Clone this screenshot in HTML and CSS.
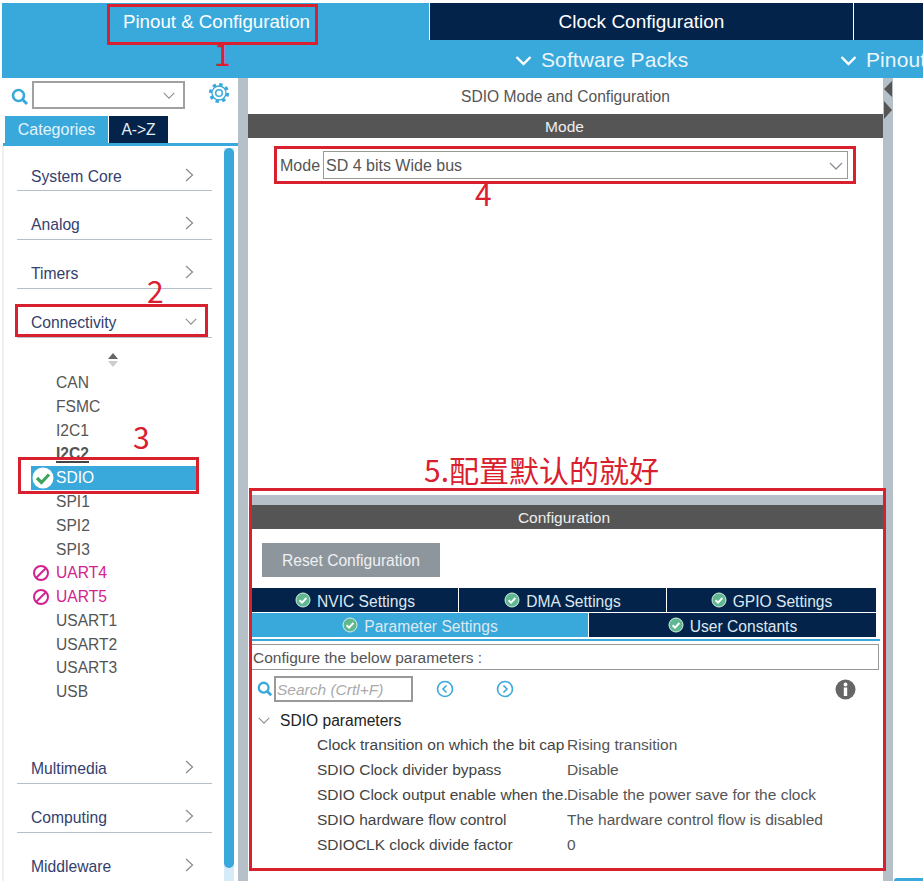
FILE: index.html
```html
<!DOCTYPE html>
<html lang="en">
<head>
  <meta charset="UTF-8">
  <title>SDIO Mode and Configuration</title>
  <link rel="stylesheet" href="styles.css">
</head>
<body>
  <svg class="defs" width="0" height="0">
    <symbol id="tick" viewBox="0 0 16 16">
      <circle cx="8" cy="8" r="7" fill="#5fb88f" stroke="#d5efe2" stroke-width="1"/>
      <path d="M4.6 8.2 7 10.6 11.4 6" fill="none" stroke="#fff" stroke-width="2"/>
    </symbol>
    <symbol id="blocked" viewBox="0 0 18 18">
      <circle cx="9" cy="9" r="7" fill="none" stroke="#d3218f" stroke-width="2"/>
      <path d="M4.5 13.5 13.5 4.5" stroke="#d3218f" stroke-width="2"/>
    </symbol>
    <symbol id="lens" viewBox="0 0 18 18">
      <circle cx="7.5" cy="7.5" r="5.5" fill="none" stroke="#39a9dc" stroke-width="2.6"/>
      <path d="M11.5 11.5 16 16" stroke="#39a9dc" stroke-width="3"/>
    </symbol>
    <symbol id="chev-right" viewBox="0 0 10 16">
      <path d="M2 2 8.5 8 2 14" fill="none" stroke="#8b8f96" stroke-width="1.3"/>
    </symbol>
    <symbol id="chev-down" viewBox="0 0 16 10">
      <path d="M2 2 8 8 14 2" fill="none" stroke="#8b8f96" stroke-width="1.3"/>
    </symbol>
  </svg>

  <div class="app">
    <header class="top">
      <div class="tabs-main">
        <div class="tab-main active">Pinout &amp; Configuration</div>
        <div class="tab-main clock">Clock Configuration</div>
        <div class="tab-main rest"></div>
      </div>
      <div class="subnav">
        <div class="subnav-item packs">
          <svg width="17" height="11" viewBox="0 0 17 11"><path d="M1.5 2 8.5 9 15.5 2" fill="none" stroke="#fff" stroke-width="2.4"/></svg>
          Software Packs
        </div>
        <div class="subnav-item pinout">
          <svg width="17" height="11" viewBox="0 0 17 11"><path d="M1.5 2 8.5 9 15.5 2" fill="none" stroke="#fff" stroke-width="2.4"/></svg>
          Pinout
        </div>
      </div>
    </header>

    <div class="main">
      <aside class="left">
        <div class="search-row">
          <svg class="search-icon" width="18" height="18"><use href="#lens"/></svg>
          <div class="combo"><svg width="14" height="9"><use href="#chev-down"/></svg></div>
          <svg class="gear" width="22" height="22" viewBox="0 0 22 22">
            <circle cx="11" cy="11" r="8.6" fill="none" stroke="#39a9dc" stroke-width="3" stroke-dasharray="3.4 3.35"/>
            <circle cx="11" cy="11" r="7" fill="none" stroke="#39a9dc" stroke-width="1.3"/>
            <circle cx="11" cy="11" r="3.3" fill="none" stroke="#39a9dc" stroke-width="1.5"/>
          </svg>
        </div>
        <div class="cat-tabs">
          <div class="cat-tab active">Categories</div>
          <div class="cat-tab">A-&gt;Z</div>
        </div>
        <div class="cat-body">
          <div class="cat-list">
            <div class="cat">System Core <svg width="10" height="16"><use href="#chev-right"/></svg></div>
            <div class="cat">Analog <svg width="10" height="16"><use href="#chev-right"/></svg></div>
            <div class="cat">Timers <svg width="10" height="16"><use href="#chev-right"/></svg></div>
            <div class="cat">Connectivity <svg class="open" width="14" height="9"><use href="#chev-down"/></svg></div>
            <div class="periph">
              <svg class="updown" width="10" height="14" viewBox="0 0 10 14">
                <path d="M5 0 10 6H0Z" fill="#666"/>
                <path d="M5 14 10 8H0Z" fill="#ccc"/>
              </svg>
              <div class="item">CAN</div>
              <div class="item">FSMC</div>
              <div class="item">I2C1</div>
              <div class="item"><span class="used">I2C2</span></div>
              <div class="item selected">
                <svg class="state" width="22" height="22" viewBox="0 0 22 22">
                  <circle cx="11" cy="11" r="10.5" fill="#fff"/>
                  <path d="M5 11 9.5 15.5 17 7.5" fill="none" stroke="#3fa35f" stroke-width="3.2"/>
                </svg>
                SDIO
              </div>
              <div class="item">SPI1</div>
              <div class="item">SPI2</div>
              <div class="item">SPI3</div>
              <div class="item off"><svg class="state" width="18" height="18"><use href="#blocked"/></svg>UART4</div>
              <div class="item off"><svg class="state" width="18" height="18"><use href="#blocked"/></svg>UART5</div>
              <div class="item">USART1</div>
              <div class="item">USART2</div>
              <div class="item">USART3</div>
              <div class="item">USB</div>
            </div>
            <div class="cat">Multimedia <svg width="10" height="16"><use href="#chev-right"/></svg></div>
            <div class="cat">Computing <svg width="10" height="16"><use href="#chev-right"/></svg></div>
            <div class="cat">Middleware <svg width="10" height="16"><use href="#chev-right"/></svg></div>
          </div>
          <div class="scroll"><div class="scroll-thumb"></div></div>
        </div>
      </aside>

      <div class="divider"></div>

      <section class="center">
        <div class="center-title">SDIO Mode and Configuration</div>
        <div class="bar">Mode</div>
        <div class="mode-row">
          <span class="mode-label">Mode</span>
          <div class="mode-select">SD 4 bits Wide bus <svg width="16" height="10"><use href="#chev-down"/></svg></div>
        </div>

        <div class="config">
          <div class="config-strip"></div>
          <div class="bar">Configuration</div>
          <button class="reset">Reset Configuration</button>
          <div class="cfg-tabs">
            <div class="cfg-tab"><svg width="16" height="16"><use href="#tick"/></svg>NVIC Settings</div>
            <div class="cfg-tab"><svg width="16" height="16"><use href="#tick"/></svg>DMA Settings</div>
            <div class="cfg-tab"><svg width="16" height="16"><use href="#tick"/></svg>GPIO Settings</div>
          </div>
          <div class="cfg-tabs second">
            <div class="cfg-tab active"><svg width="16" height="16"><use href="#tick"/></svg>Parameter Settings</div>
            <div class="cfg-tab"><svg width="16" height="16"><use href="#tick"/></svg>User Constants</div>
          </div>
          <div class="cfg-note">Configure the below parameters :</div>
          <div class="cfg-search">
            <svg width="16" height="16"><use href="#lens"/></svg>
            <div class="cfg-input">Search (Crtl+F)</div>
            <svg class="nav-prev" width="18" height="18" viewBox="0 0 18 18">
              <circle cx="9" cy="9" r="7.5" fill="none" stroke="#39a9dc" stroke-width="1.6"/>
              <path d="M10.5 5.5 7 9 10.5 12.5" fill="none" stroke="#39a9dc" stroke-width="1.6"/>
            </svg>
            <svg class="nav-next" width="18" height="18" viewBox="0 0 18 18">
              <circle cx="9" cy="9" r="7.5" fill="none" stroke="#39a9dc" stroke-width="1.6"/>
              <path d="M7.5 5.5 11 9 7.5 12.5" fill="none" stroke="#39a9dc" stroke-width="1.6"/>
            </svg>
            <svg class="info" width="21" height="21" viewBox="0 0 21 21">
              <circle cx="10.5" cy="10.5" r="10" fill="#666"/>
              <rect x="8.8" y="8.5" width="3.4" height="8.5" fill="#fff"/>
              <circle cx="10.5" cy="5.5" r="1.9" fill="#fff"/>
            </svg>
          </div>
          <div class="param-head"><svg width="14" height="9"><use href="#chev-down"/></svg>SDIO parameters</div>
          <div class="param"><span class="param-name">Clock transition on which the bit cap</span><span>Rising transition</span></div>
          <div class="param"><span class="param-name">SDIO Clock divider bypass</span><span>Disable</span></div>
          <div class="param"><span class="param-name">SDIO Clock output enable when the.</span><span>Disable the power save for the clock</span></div>
          <div class="param"><span class="param-name">SDIO hardware flow control</span><span>The hardware control flow is disabled</span></div>
          <div class="param"><span class="param-name">SDIOCLK clock divide factor</span><span>0</span></div>
        </div>
      </section>

      <div class="divider"></div>

      <div class="right">
        <svg class="collapse" width="9" height="38" viewBox="0 0 9 38">
          <path d="M8 0V16L0 8Z" fill="#555"/>
          <path d="M0 20V38L8 29Z" fill="#555"/>
        </svg>
        <div class="right-tab"></div>
      </div>
    </div>

    <!-- red notes drawn on top of the screenshot -->
    <div class="box box-1"></div>
    <div class="box box-2"></div>
    <div class="box box-3"></div>
    <div class="box box-4"></div>
    <div class="box box-5"></div>
    <div class="note note-1">1</div>
    <div class="note note-2">2</div>
    <div class="note note-3">3</div>
    <div class="note note-4">4</div>
    <div class="note note-5">5.配置默认的就好</div>
  </div>
</body>
</html>
```

FILE: styles.css
```css
* {
  box-sizing: border-box;
}

body {
  margin: 0;
  background: #fff;
  font-family: "Liberation Sans", Arial, sans-serif;
  overflow: hidden;
}

.defs {
  position: absolute;
}

.app {
  position: relative;
  width: 923px;
  height: 881px;
  overflow: hidden;
}

/* top bar */
.top {
  margin: 3px 0 0 2px;
  background: #39a9dc;
}

.tabs-main {
  display: flex;
  gap: 1px;
  height: 37px;
  background: #fff;
}

.tab-main {
  display: flex;
  align-items: center;
  justify-content: center;
  background: #03234b;
  color: #fff;
  font-size: 18.7px;
}

.tab-main.active {
  width: 427px;
  padding-left: 2px;
  background: #39a9dc;
}

.tab-main.clock {
  width: 423px;
  font-size: 19px;
}

.tab-main.rest {
  flex: 1;
}

.subnav {
  position: relative;
  height: 38px;
}

.subnav-item {
  position: absolute;
  top: 8px;
  display: flex;
  align-items: center;
  gap: 9px;
  color: #eaf6fc;
  font-size: 21px;
  letter-spacing: 0.1px;
  white-space: nowrap;
}

.subnav-item.packs {
  left: 513px;
}

.subnav-item.pinout {
  left: 838px;
}

.main {
  display: flex;
  height: 803px;
}

/* left column */
.left {
  width: 236px;
  margin-left: 2px;
  flex-shrink: 0;
}

.search-row {
  position: relative;
  display: flex;
  align-items: center;
  height: 38px;
  padding: 0 0 0 9px;
}

.search-icon {
  margin-top: -1px;
}

.combo {
  display: flex;
  align-items: center;
  justify-content: flex-end;
  width: 153px;
  height: 28px;
  margin-left: 3px;
  margin-top: -4px;
  padding-right: 7px;
  border: 2px solid #a0a0a0;
}

.gear {
  margin: -8px 0 0 23px;
}

.cat-tabs {
  display: flex;
  gap: 1px;
  height: 30px;
  margin-left: 1px;
  border-bottom: 3px solid #39a9dc;
  padding-left: 2px;
}

.cat-tab {
  display: flex;
  align-items: center;
  justify-content: center;
  width: 59px;
  background: #03234b;
  color: #e6eef5;
  font-size: 15.6px;
}

.cat-tab.active {
  width: 103px;
  background: #39a9dc;
  color: #e4f3fb;
  font-size: 16px;
}

.cat-body {
  display: flex;
  height: 735px;
  border-left: 2px solid #f0f0f0;
}

.cat-list {
  width: 220px;
  padding: 0 10px 0 13px;
  flex-shrink: 0;
}

.cat {
  display: flex;
  align-items: center;
  justify-content: space-between;
  width: 195px;
  height: 49px;
  padding: 20px 18px 0 14px;
  border-bottom: 1px solid #b4bfc9;
  color: #34406e;
  font-size: 15.7px;
}

.cat:first-child {
  height: 45px;
  padding-top: 17px;
}

.cat svg {
  margin-top: -4px;
}

.cat svg.open {
  margin-right: -4px;
}

.periph {
  height: 397px;
  padding-top: 15px;
}

.updown {
  display: block;
  margin: 0 0 4.4px 91px;
}

.item {
  display: flex;
  align-items: center;
  position: relative;
  height: 23.75px;
  margin-left: 14px;
  padding-left: 25px;
  color: #555;
  font-size: 15.6px;
}

.used {
  display: inline-block;
  height: 17px;
  line-height: 16px;
  font-weight: bold;
  border-bottom: 2px solid #444;
}

.item.selected {
  width: 166px;
  background: #39a9dc;
  color: #fff;
}

.item.off {
  color: #d3218f;
}

.state {
  position: absolute;
  left: 1px;
}

.scroll {
  width: 10px;
  margin-top: 2px;
  background: #d6eaf8;
}

.scroll-thumb {
  height: 720px;
  background: #39a9dc;
  border-radius: 5px;
}

.divider {
  width: 10px;
  flex-shrink: 0;
  background: #b5c0c8;
}

/* middle column */
.center {
  display: flex;
  flex-direction: column;
  width: 635px;
  flex-shrink: 0;
}

.center-title {
  height: 36px;
  padding-top: 10px;
  text-align: center;
  color: #555;
  font-size: 15.6px;
}

.bar {
  height: 24px;
  padding-right: 2px;
  line-height: 26px;
  background: #555;
  color: #eee;
  text-align: center;
  font-size: 15.5px;
}

.mode-row {
  display: flex;
  align-items: center;
  height: 28px;
  margin: 13px 0 0 32px;
  color: #555;
  font-size: 16px;
}

.mode-label {
  width: 43px;
  padding-top: 1px;
}

.mode-select {
  display: flex;
  align-items: center;
  justify-content: space-between;
  width: 525px;
  height: 28px;
  padding: 2px 3px 0 2px;
  border: 1px solid #999;
}

.config {
  margin-top: auto;
  height: 386px;
  color: #555;
}

.config-strip {
  height: 10px;
  margin: 0 0 0 3px;
  background: #b5c0c8;
}

.config .bar {
  margin-left: 3px;
  padding-right: 6px;
}

.reset {
  display: block;
  width: 178px;
  height: 34px;
  margin: 14px 0 11px 14px;
  padding-top: 3px;
  border: none;
  background: #8e969d;
  color: #eef0f2;
  font-family: inherit;
  font-size: 15.6px;
}

.cfg-tabs {
  display: flex;
  gap: 1px;
  height: 24px;
  width: 624px;
  margin-left: 4px;
}

.cfg-tabs.second {
  height: 28px;
  margin-top: 1px;
  padding-bottom: 2px;
  border-bottom: 2px solid #39a9dc;
  width: 628px;
  padding-right: 4px;
}

.cfg-tab {
  flex: 1;
  display: flex;
  align-items: center;
  justify-content: center;
  gap: 6px;
  padding-top: 3px;
  background: #03234b;
  color: #dfe8f0;
  font-size: 15.6px;
}

.cfg-tab:nth-child(1) {
  flex: 0 0 206px;
}

.cfg-tab:nth-child(2) {
  flex: 0 0 207px;
}

.cfg-tab svg {
  margin-top: -3px;
}

.cfg-tabs.second .cfg-tab {
  flex: 1;
}

.cfg-tabs.second .cfg-tab.active {
  flex: 0 0 336px;
  background: #39a9dc;
}

.cfg-note {
  height: 26px;
  width: 628px;
  margin: 3px 0 0 3px;
  padding-left: 1px;
  line-height: 25px;
  border: 1px solid #999;
  font-size: 15.5px;
}

.cfg-search {
  display: flex;
  align-items: center;
  height: 26px;
  margin: 6px 0 0 9px;
}

.cfg-input {
  width: 139px;
  height: 26px;
  margin-left: 1px;
  padding-left: 1px;
  line-height: 23px;
  border: 2px solid #999;
  color: #aaa;
  font-style: italic;
  font-size: 15.5px;
}

.nav-prev {
  margin-left: 23px;
}

.nav-next {
  margin-left: 42px;
}

.info {
  margin-left: 321px;
}

.param-head {
  display: flex;
  align-items: center;
  gap: 9px;
  height: 25px;
  margin: 6px 0 0 9px;
  color: #222;
  font-size: 15.6px;
}

.param {
  display: flex;
  height: 25px;
  line-height: 24px;
  padding-left: 69px;
  font-size: 15.5px;
  white-space: nowrap;
}

.param-name {
  width: 250px;
  color: #444;
}

/* right edge */
.right {
  position: relative;
  flex: 1;
  display: flex;
  flex-direction: column;
  justify-content: flex-end;
}

.collapse {
  position: absolute;
  left: -9px;
  top: 3px;
}

.right-tab {
  height: 3px;
  margin-left: 1px;
  background: #39a9dc;
  border-top-left-radius: 3px;
}

/* annotations */
.box {
  position: absolute;
  border: 3px solid #d9202e;
}

.box-1 { left: 107px; top: 4px; width: 211px; height: 41px; }
.box-2 { left: 15px; top: 304px; width: 193px; height: 33px; }
.box-3 { left: 18px; top: 457px; width: 181px; height: 37px; }
.box-4 { left: 274px; top: 146px; width: 582px; height: 38px; }
.box-5 { left: 249px; top: 488px; width: 637px; height: 383px; }

.note {
  position: absolute;
  color: #d9202e;
  font-family: "Noto Sans CJK SC", sans-serif;
  font-size: 30px;
  line-height: 1;
}

.note-1 { left: 214px; top: 38px; }
.note-2 { left: 147px; top: 275px; }
.note-3 { left: 133px; top: 421px; }
.note-4 { left: 475px; top: 178px; }
.note-5 { left: 424px; top: 454px; }
```
